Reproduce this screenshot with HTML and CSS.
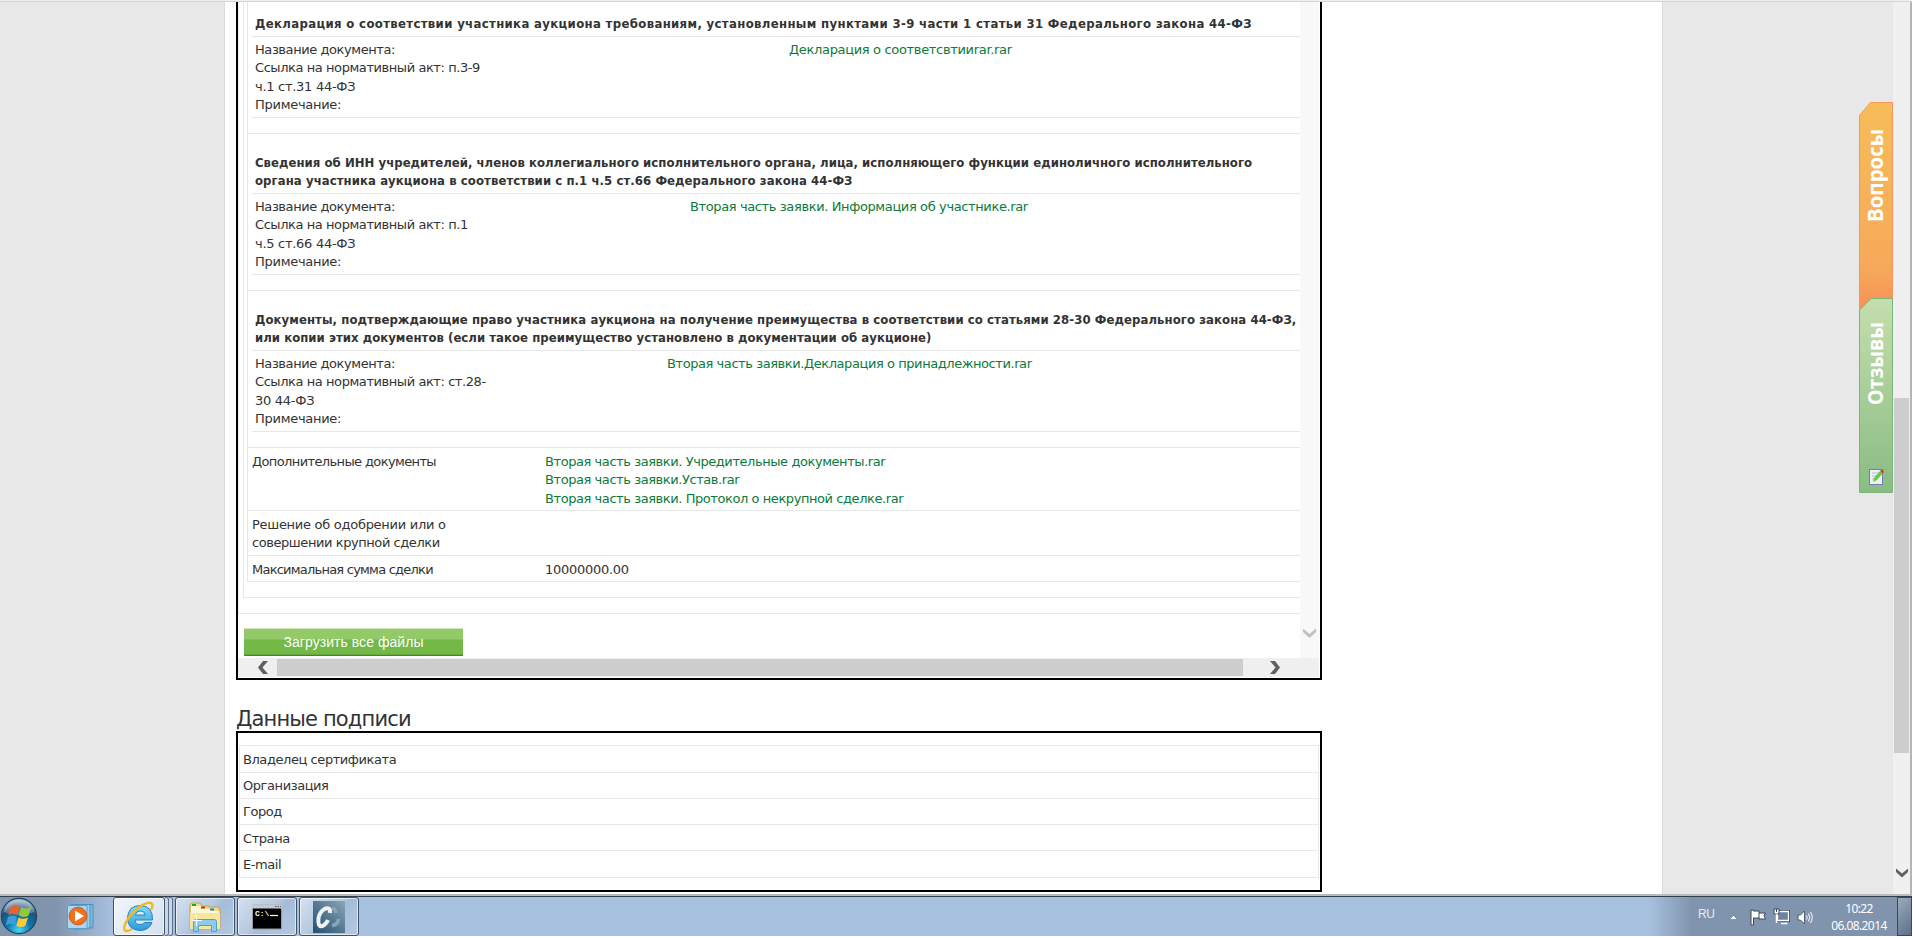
FILE: index.html
```html
<!DOCTYPE html>
<html lang="ru">
<head>
  <meta charset="UTF-8">
  <title>Данные заявки</title>
  <link rel="stylesheet" href="styles.css">
</head>
<body>
  <div class="browser">
    <div class="viewport">
      <main class="page">
        <!-- Application documents -->
        <section class="frame">
          <div class="frame-body">
            <div class="frame-content">
              <div class="level level-1">
                <div class="level level-2">
                  <div class="level level-3">
                    <div class="doc doc-first">
                      <h3 class="doc-title">Декларация о соответствии участника аукциона требованиям, установленным пунктами 3-9 части 1 статьи 31 Федерального закона 44-ФЗ</h3>
                      <div class="doc-row">
                        <p class="doc-label">Название документа:<br>Ссылка на нормативный акт: п.3-9<br><span class="loose">ч.1 ст.31 44-ФЗ</span><br><span class="loose">Примечание:</span></p>
                        <a class="link link-a">Декларация о соответсвтииrar.rar</a>
                      </div>
                    </div>
                    <div class="doc">
                      <h3 class="doc-title"><span class="snug">Сведения об ИНН учредителей, членов коллегиального исполнительного органа, лица, исполняющего функции единоличного исполнительного</span><br>органа участника аукциона в соответствии с п.1 ч.5 ст.66 Федерального закона 44-ФЗ</h3>
                      <div class="doc-row">
                        <p class="doc-label">Название документа:<br>Ссылка на нормативный акт: п.1<br><span class="loose">ч.5 ст.66 44-ФЗ</span><br><span class="loose">Примечание:</span></p>
                        <a class="link link-b">Вторая часть заявки. Информация об участнике.rar</a>
                      </div>
                    </div>
                    <div class="doc">
                      <h3 class="doc-title">Документы, подтверждающие право участника аукциона на получение преимущества в соответствии со статьями 28-30 Федерального закона 44-ФЗ,<br><span class="snug">или копии этих документов (если такое преимущество установлено в документации об аукционе)</span></h3>
                      <div class="doc-row">
                        <p class="doc-label">Название документа:<br>Ссылка на нормативный акт: ст.28-<br><span class="loose">30 44-ФЗ</span><br><span class="loose">Примечание:</span></p>
                        <a class="link link-c">Вторая часть заявки.Декларация о принадлежности.rar</a>
                      </div>
                    </div>
                    <div class="row row-3">
                      <p class="row-label tight">Дополнительные документы</p>
                      <p class="row-value link">Вторая часть заявки. Учредительные документы.rar<br>Вторая часть заявки.Устав.rar<br>Вторая часть заявки. Протокол о некрупной сделке.rar</p>
                    </div>
                    <div class="row row-2">
                      <p class="row-label"><span class="loose">Решение об одобрении или о</span><br>совершении крупной сделки</p>
                    </div>
                    <div class="row row-1">
                      <p class="row-label tighter">Максимальная сумма сделки</p>
                      <p class="row-value loose">10000000.00</p>
                    </div>
                  </div>
                </div>
              </div>
              <button class="btn">Загрузить все файлы</button>
            </div>
            <div class="vscroll">
              <svg width="13" height="10" viewBox="0 0 13 10"><path d="M0 0.5 L6.5 6 L13 0.5 V4 L6.5 10 L0 4Z" fill="#c0c0c0"/></svg>
            </div>
          </div>
          <div class="hscroll">
            <svg width="10" height="13" viewBox="0 0 10 13"><path d="M5 0 H10 L4.5 6.5 L10 13 H5 L0 6.5Z" fill="#606060"/></svg>
            <div class="hthumb"></div>
            <svg width="10" height="13" viewBox="0 0 10 13"><path d="M0 0 H5 L10 6.5 L5 13 H0 L5.5 6.5Z" fill="#606060"/></svg>
          </div>
        </section>

        <!-- Signature data -->
        <h2 class="section-title">Данные подписи</h2>
        <section class="sign">
          <div class="sign-table">
            <div class="sign-row first">Владелец сертификата</div>
            <div class="sign-row">Организация</div>
            <div class="sign-row">Город</div>
            <div class="sign-row low">Страна</div>
            <div class="sign-row low last">E-mail</div>
          </div>
        </section>
      </main>

      <!-- Side tabs -->
      <svg class="side-tabs" width="34" height="392" viewBox="0 0 34 392">
        <defs>
          <linearGradient id="orange" x1="0" y1="0" x2="0" y2="1">
            <stop offset="0" stop-color="#f6bd58"/>
            <stop offset="0.8" stop-color="#f7a95a"/>
            <stop offset="1" stop-color="#f88f56"/>
          </linearGradient>
          <linearGradient id="green" x1="0" y1="0" x2="0" y2="1">
            <stop offset="0" stop-color="#c5dead"/>
            <stop offset="1" stop-color="#89bc83"/>
          </linearGradient>
        </defs>
        <path d="M0.5 208 V13.5 L11.5 0.5 H33.5 V208Z" fill="url(#orange)" stroke="#f7955c"/>
        <path d="M0.5 390.5 V208 L12 196.5 H33.5 V390.5Z" fill="url(#green)" stroke="#7cb57a"/>
        <text class="tab-text" transform="translate(24 120) rotate(-90)" textLength="93" lengthAdjust="spacingAndGlyphs">Вопросы</text>
        <text class="tab-text" transform="translate(24 303) rotate(-90)" textLength="83" lengthAdjust="spacingAndGlyphs">Отзывы</text>
        <rect x="10.5" y="367.500" width="13" height="15" fill="#eef1fa" stroke="#6f7fae"/>
        <path d="M13 371h7M13 374h5M13 377h4" stroke="#b4bedb"/>
        <path d="M14 380 L15 376 L21 369 L24 371 L18 378Z" fill="#63cf35"/>
        <path d="M21 369 L23 367.500 L25 369.500 L24 371.500Z" fill="#d83a32"/>
      </svg>

      <div class="scrollbar">
        <div class="thumb"></div>
        <svg class="down" width="12" height="10" viewBox="0 0 12 10"><path d="M0 0.5 L6 5.500 L12 0.5 V4 L6 9.500 L0 4Z" fill="#606060"/></svg>
      </div>
    </div>

    <!-- Taskbar -->
    <footer class="taskbar">
      <svg class="orb" width="38" height="38" viewBox="0 0 38 38">
        <defs>
          <radialGradient id="orb" cx="0.5" cy="0.9" r="0.85">
            <stop offset="0" stop-color="#45d8f8"/>
            <stop offset="0.4" stop-color="#0f76ac"/>
            <stop offset="0.75" stop-color="#1f5179"/>
            <stop offset="1" stop-color="#9cb8cd"/>
          </radialGradient>
        </defs>
        <circle cx="19" cy="19" r="17.600" fill="url(#orb)" stroke="#1f4560" stroke-width="1.200"/>
        <path d="M4 15 Q6 3.500 19 3 Q32 3.500 34 15 Q19 21 4 15Z" fill="#fff" opacity="0.28"/>
        <path d="M10.500 10 Q15 6.500 19.500 9.500 L17.500 18 Q13 15.500 8.500 18.500Z" fill="#e8622b"/>
        <path d="M21 10 Q26 13 31 10 L28.500 18.500 Q24 21.500 19 18.500Z" fill="#93c83d"/>
        <path d="M8 20 Q12.500 17 17 19.700 L14.800 28 Q10.500 25.500 5.800 28.500Z" fill="#3f9bdc"/>
        <path d="M18.500 20.500 Q23 23 28 20.500 L25.500 28.500 Q21 31.500 16.300 28.800Z" fill="#fbc93a"/>
      </svg>
      <svg class="wmp" width="30" height="28" viewBox="0 0 30 28">
        <path d="M18 24 L29 25 L22 27 H4Z" fill="#6a86a8" opacity="0.35"/>
        <path d="M8 1.500H26V24L8 26Z" fill="#7fb9de" stroke="#4c93c4"/>
        <path d="M4 1.500H23V25H4Z" fill="#9bcdea" stroke="#4c93c4"/>
        <path d="M0.500 2.500H20V25.500H0.500Z" fill="#a9d8f0" stroke="#5a9fca"/>
        <circle cx="11" cy="13" r="8.800" fill="#f26f1f" stroke="#c9591c"/>
        <path d="M8 7.500 L17 13 L8 18.500Z" fill="#fff"/>
      </svg>
      <div class="task active">
        <svg width="32" height="32" viewBox="0 0 32 32">
          <defs><linearGradient id="ie" x1="0" y1="0" x2="0" y2="1"><stop offset="0" stop-color="#7fdcfa"/><stop offset="1" stop-color="#2b9adb"/></linearGradient></defs>
          <path d="M29.500 19 H12 Q12.500 23.500 17 23.500 Q20 23.500 21.500 21.500 H29 Q26 29.500 17 29.500 Q4.500 29 4.500 17 Q5 4.500 17.500 4.500 Q30 5 29.500 19Z M12.300 14 H22.300 Q21.800 10 17.300 10 Q13 10 12.300 14Z" fill="url(#ie)" stroke="#2a83c0" fill-rule="evenodd"/>
          <path d="M28 9 Q32 1 25 1.800 Q15 4 7 15 Q-1 26 2 29.500 Q4 31 9 28" fill="none" stroke="#f3b81c" stroke-width="2.400"/>
        </svg>
      </div>
      <div class="stack"></div>
      <div class="stack stack-last"></div>
      <div class="task">
        <svg width="34" height="32" viewBox="0 0 34 32">
          <path d="M2 28V3.500L4 2H12L14 5H20L22 6H30L32 9V28Z" fill="#f1d981" stroke="#c6a349"/>
          <path d="M3 5H13L15 8H22L24 10H31V13H3Z" fill="#fdf7d8"/>
          <path d="M4 3H8V5H4Z" fill="#18a82c"/><path d="M13 5.500H17V7.500H13Z" fill="#c03a22"/><path d="M22 7.500H26V9.500H22Z" fill="#1d86d8"/>
          <path d="M2 12H32V28H2Z" fill="#f7e69d"/>
          <path d="M5.500 30.500V20.500Q5.500 18.500 8 18.500H26Q28.500 18.500 28.500 20.500V30.500H23.500V24.500H10.500V30.500Z" fill="#8ccbec" stroke="#4d9fd0"/>
          <path d="M8.500 14V25M3.500 19.500H14" stroke="#fff" stroke-width="1.200"/>
        </svg>
      </div>
      <div class="task">
        <svg width="32" height="28" viewBox="0 0 32 28">
          <path d="M1.500 2H30.500V26H1.500Z" fill="#000" stroke="#999"/>
          <path d="M1 1.500H31V5.500H1Z" fill="#c5cbd6"/>
          <path d="M24 3.500h1.500M26.500 3.500h1.500M29 3.500h1" stroke="#555"/>
          <text class="cmd-text" x="4" y="13">C:\</text>
          <path d="M19 12.500H27" stroke="#fff" stroke-width="1.200"/>
        </svg>
      </div>
      <div class="task">
        <svg width="32" height="32" viewBox="0 0 32 32">
          <defs><linearGradient id="cc" x1="1" y1="0" x2="0" y2="1"><stop offset="0" stop-color="#8aa5b6"/><stop offset="1" stop-color="#234e70"/></linearGradient></defs>
          <path d="M0 0H32V32H0Z" fill="url(#cc)"/>
          <path d="M17 9 Q22 5.500 23 12 M25.500 18 Q25 24 19 24.500" fill="none" stroke="#8aa5b5" stroke-width="3.500"/>
          <path d="M17 12 Q17.500 6 12.500 7.500 Q7 10 5.500 17 Q4.500 26.500 9.500 25 Q13 23.500 15 19" fill="none" stroke="#eef2f5" stroke-width="4"/>
        </svg>
      </div>
      <div class="tray">
        <span class="lang">RU</span>
        <svg class="up" width="9" height="5" viewBox="0 0 9 5"><path d="M0.500 4.500 L4.500 0.500 L8.500 4.500Z" fill="#fff" stroke="#5b6b80" stroke-width="0.500"/></svg>
        <svg class="flag" width="17" height="17" viewBox="0 0 17 17"><path d="M1 1H3.500V2H9V4H15.500L14 6.500L15.500 10H9V9H3.500V16H1Z" fill="#fff" stroke="#37485c"/><path d="M9 4V9" stroke="#37485c"/></svg>
        <svg class="net" width="17" height="17" viewBox="0 0 17 17"><path d="M4.500 3.500H15.500V12.500H4.500Z" fill="#6d829c" stroke="#37485c" stroke-width="3"/><path d="M4.500 3.500H15.500V12.500H4.500Z" fill="#6d829c" stroke="#fff" stroke-width="1.300"/><path d="M8 15.500H14.500" stroke="#fff" stroke-width="1.500"/><path d="M1 1H6V6H1Z" fill="#fff" stroke="#37485c"/><path d="M3.500 1V4" stroke="#37485c"/><path d="M3.500 6V15" stroke="#fff" stroke-width="1.500"/></svg>
        <svg class="sound" width="17" height="15" viewBox="0 0 17 15"><path d="M1 5H3.500L7.500 1V14L3.500 10H1Z" fill="#fff" stroke="#37485c" stroke-width="0.800"/><path d="M9.500 5.500Q11 7.500 9.500 9.500M11.500 3.500Q14 7.500 11.500 11.500M13.500 2Q17 7.500 13.500 13" fill="none" stroke="#fff"/></svg>
        <div class="clock"><span>10:22</span><span>06.08.2014</span></div>
        <div class="peek"></div>
      </div>
    </footer>
  </div>
</body>
</html>
```
FILE: styles.css
```css
* {
  margin: 0;
  padding: 0;
  box-sizing: border-box;
}

body {
  background-color: #fff;
  overflow: hidden;
  font-family: Verdana, "DejaVu Sans", sans-serif;
  font-size: 13px;
  line-height: 18.4px;
  letter-spacing: -0.43px;
  color: #333;
}

svg {
  display: block;
  flex: none;
}

.browser {
  width: 1912px;
  height: 936px;
  display: flex;
  flex-direction: column;
}

.viewport {
  height: 894px;
  border-top: 1px solid #f3efea;
  background-color: #e8e8e8;
  box-shadow: inset 0 1px 0 #d9d3cc;
  display: flex;
  padding-top: 1px;
  padding-left: 224px;
}

.page {
  width: 1439px;
  background-color: #fff;
  border-left: 1px solid #dcdcdc;
  border-right: 1px solid #dcdcdc;
  padding-left: 11px;
}

/* Documents frame */
.frame {
  width: 1086px;
  height: 678px;
  border: 2px solid #000;
  border-top: none;
}

.frame-body {
  display: flex;
  height: 656px;
}

.frame-content {
  width: 1062px;
}

.level {
  border-left: 1px solid #e8e8e8;
  border-bottom: 1px solid #e8e8e8;
}

.level-1 {
  padding: 0 0 15px 4px;
  border-left-color: #f0f0f0;
}

.level-2 {
  padding: 0 0 15px 3px;
}

.doc {
  height: 157px;
  padding-left: 4px;
  border-bottom: 1px solid #e8e8e8;
}

.doc-first {
  height: 132px;
}

.doc-title {
  height: 60px;
  padding: 19.6px 0 0 3px;
  font-family: "DejaVu Sans Condensed", Verdana, sans-serif;
  font-size: 13px;
  font-weight: bold;
  letter-spacing: 0.075px;
  white-space: nowrap;
  border-bottom: 1px solid #e8e8e8;
}

.doc-first .doc-title {
  height: 35px;
  padding-top: 13px;
  letter-spacing: 0.35px;
}

.snug {
  letter-spacing: 0.04px;
}

.doc-row {
  display: flex;
  height: 81px;
  padding: 4px 0 0 3px;
  border-bottom: 1px solid #e8e8e8;
}

.doc-label {
  width: 400px;
  white-space: nowrap;
}

.loose {
  letter-spacing: -0.28px;
}

.tight {
  letter-spacing: -0.62px;
}

.tighter {
  letter-spacing: -0.77px;
}

.link {
  color: #0b7a3b;
  white-space: nowrap;
}

.link-a {
  padding-left: 134px;
  letter-spacing: -0.33px;
}

.link-b {
  padding-left: 35px;
  letter-spacing: -0.38px;
}

.link-c {
  padding-left: 12px;
}

.row {
  display: flex;
  padding: 5px 0 0 4px;
  border-bottom: 1px solid #e8e8e8;
}

.row-label {
  width: 293px;
}

.row-3 {
  height: 63px;
}

.row-2 {
  height: 45px;
}

.row-1 {
  height: 25px;
  border-bottom: none;
}

.btn {
  display: block;
  width: 219px;
  height: 28px;
  margin: 14px 0 0 6px;
  border: none;
  border-top: 1px solid #cfe6b8;
  border-bottom: 1px solid #4c7f2c;
  background: linear-gradient(#93c968 0, #93c968 10px, #72b947 11px, #72b947 24px, #66a43d 26px);
  color: #fff;
  font-family: "Liberation Sans", Arial, sans-serif;
  font-size: 14px;
  letter-spacing: 0.05px;
}

.vscroll {
  width: 19px;
  background-color: #f8f8f8;
  display: flex;
  align-items: flex-end;
  padding: 0 0 20px 3px;
}

.hscroll {
  display: flex;
  align-items: center;
  height: 19px;
  width: 1081px;
  padding-left: 20px;
  background-color: #efefef;
}

.hthumb {
  width: 966px;
  height: 17px;
  margin: 0 27px 0 9px;
  background-color: #cdcdcd;
}

/* Signature */
.section-title {
  height: 51px;
  padding-top: 27px;
  font-size: 21px;
  line-height: 24px;
  font-weight: normal;
  letter-spacing: -0.85px;
}

.sign {
  width: 1086px;
  height: 161px;
  border: 2px solid #000;
  padding: 12px 1px 0;
}

.sign-table {
  border: 1px solid #e8e8e8;
}

.sign-row {
  height: 26px;
  padding: 4px 0 0 3px;
  border-bottom: 1px solid #e8e8e8;
}

.sign-row.first {
  height: 27px;
  padding-top: 5px;
}

.sign-row.low {
  padding-top: 5px;
}

.sign-row.last {
  border-bottom: none;
}

/* Right side */
.side-tabs {
  margin: 100px 0 0 196px;
}

.tab-text {
  font-family: "Open Sans", sans-serif;
  font-size: 21px;
  font-weight: bold;
  letter-spacing: 0;
  fill: #fff;
}

.scrollbar {
  width: 19px;
  padding: 396px 2px 0 1px;
  background-color: #f0f0f0;
  border-right: 2px solid #b4b4b4;
}

.thumb {
  width: 15px;
  height: 355px;
  background-color: #cdcdcd;
}

.down {
  margin: 115px 0 0 2px;
}

/* Taskbar */
.taskbar {
  height: 42px;
  display: flex;
  align-items: flex-start;
  border-top: 2px solid #b9bcba;
  box-shadow: inset 0 1px 0 #2f3f4c;
  background: linear-gradient(90deg, #8194ad 0, #8194ad 55px, #a6c0de 112px, #a6c0de 1650px, #8194ad 1692px);
}

.orb {
  margin: 1px 0 0;
}

.wmp {
  margin: 7px 16px 0 29px;
}

.task {
  width: 60px;
  height: 39px;
  margin: 1px 2px 0 0;
  display: flex;
  align-items: center;
  justify-content: center;
  border: 1px solid #3f5368;
  border-radius: 3px;
  box-shadow: inset 0 0 0 1px rgba(255, 255, 255, 0.6);
  background: linear-gradient(135deg, #d5e1ef 0, #b5c9e1 45%, #a5bcd9 55%, #b4c9e1 100%);
}

.task.active {
  width: 52px;
  margin-right: 0;
  background: linear-gradient(135deg, #f2f6fb, #d3e0ee);
}

.stack {
  width: 4px;
  height: 39px;
  margin-top: 1px;
  border: 1px solid #5d7085;
  border-left: none;
  border-radius: 0 3px 3px 0;
  background-color: #c8d8ea;
}

.stack-last {
  margin-right: 2px;
}

.cmd-text {
  fill: #fff;
  font-family: "Liberation Mono", monospace;
  font-size: 8px;
  font-weight: bold;
  letter-spacing: 0;
}

.tray {
  display: flex;
  height: 40px;
  margin-left: auto;
  color: #fff;
  font-family: "Noto Sans", sans-serif;
  font-size: 12px;
}

.lang {
  width: 32px;
  padding-top: 9px;
  font-family: "Liberation Sans", Arial, sans-serif;
  letter-spacing: -0.4px;
  color: #e6ebf1;
}

.up {
  margin: 19px 12px 0 -1px;
}

.flag {
  margin: 13px 7px 0 0;
}

.net {
  margin: 12px 7px 0 -1px;
}

.sound {
  margin: 14px 16px 0 0;
}

.clock {
  width: 58px;
  display: flex;
  flex-direction: column;
  align-items: center;
  padding-top: 4px;
  line-height: 17px;
  letter-spacing: -0.6px;
}

.peek {
  width: 15px;
  height: 39px;
  margin: 1px 0 0 9px;
  border: 1px solid #39495c;
  background: linear-gradient(135deg, #9aabbf, #5d6f87);
}
```
